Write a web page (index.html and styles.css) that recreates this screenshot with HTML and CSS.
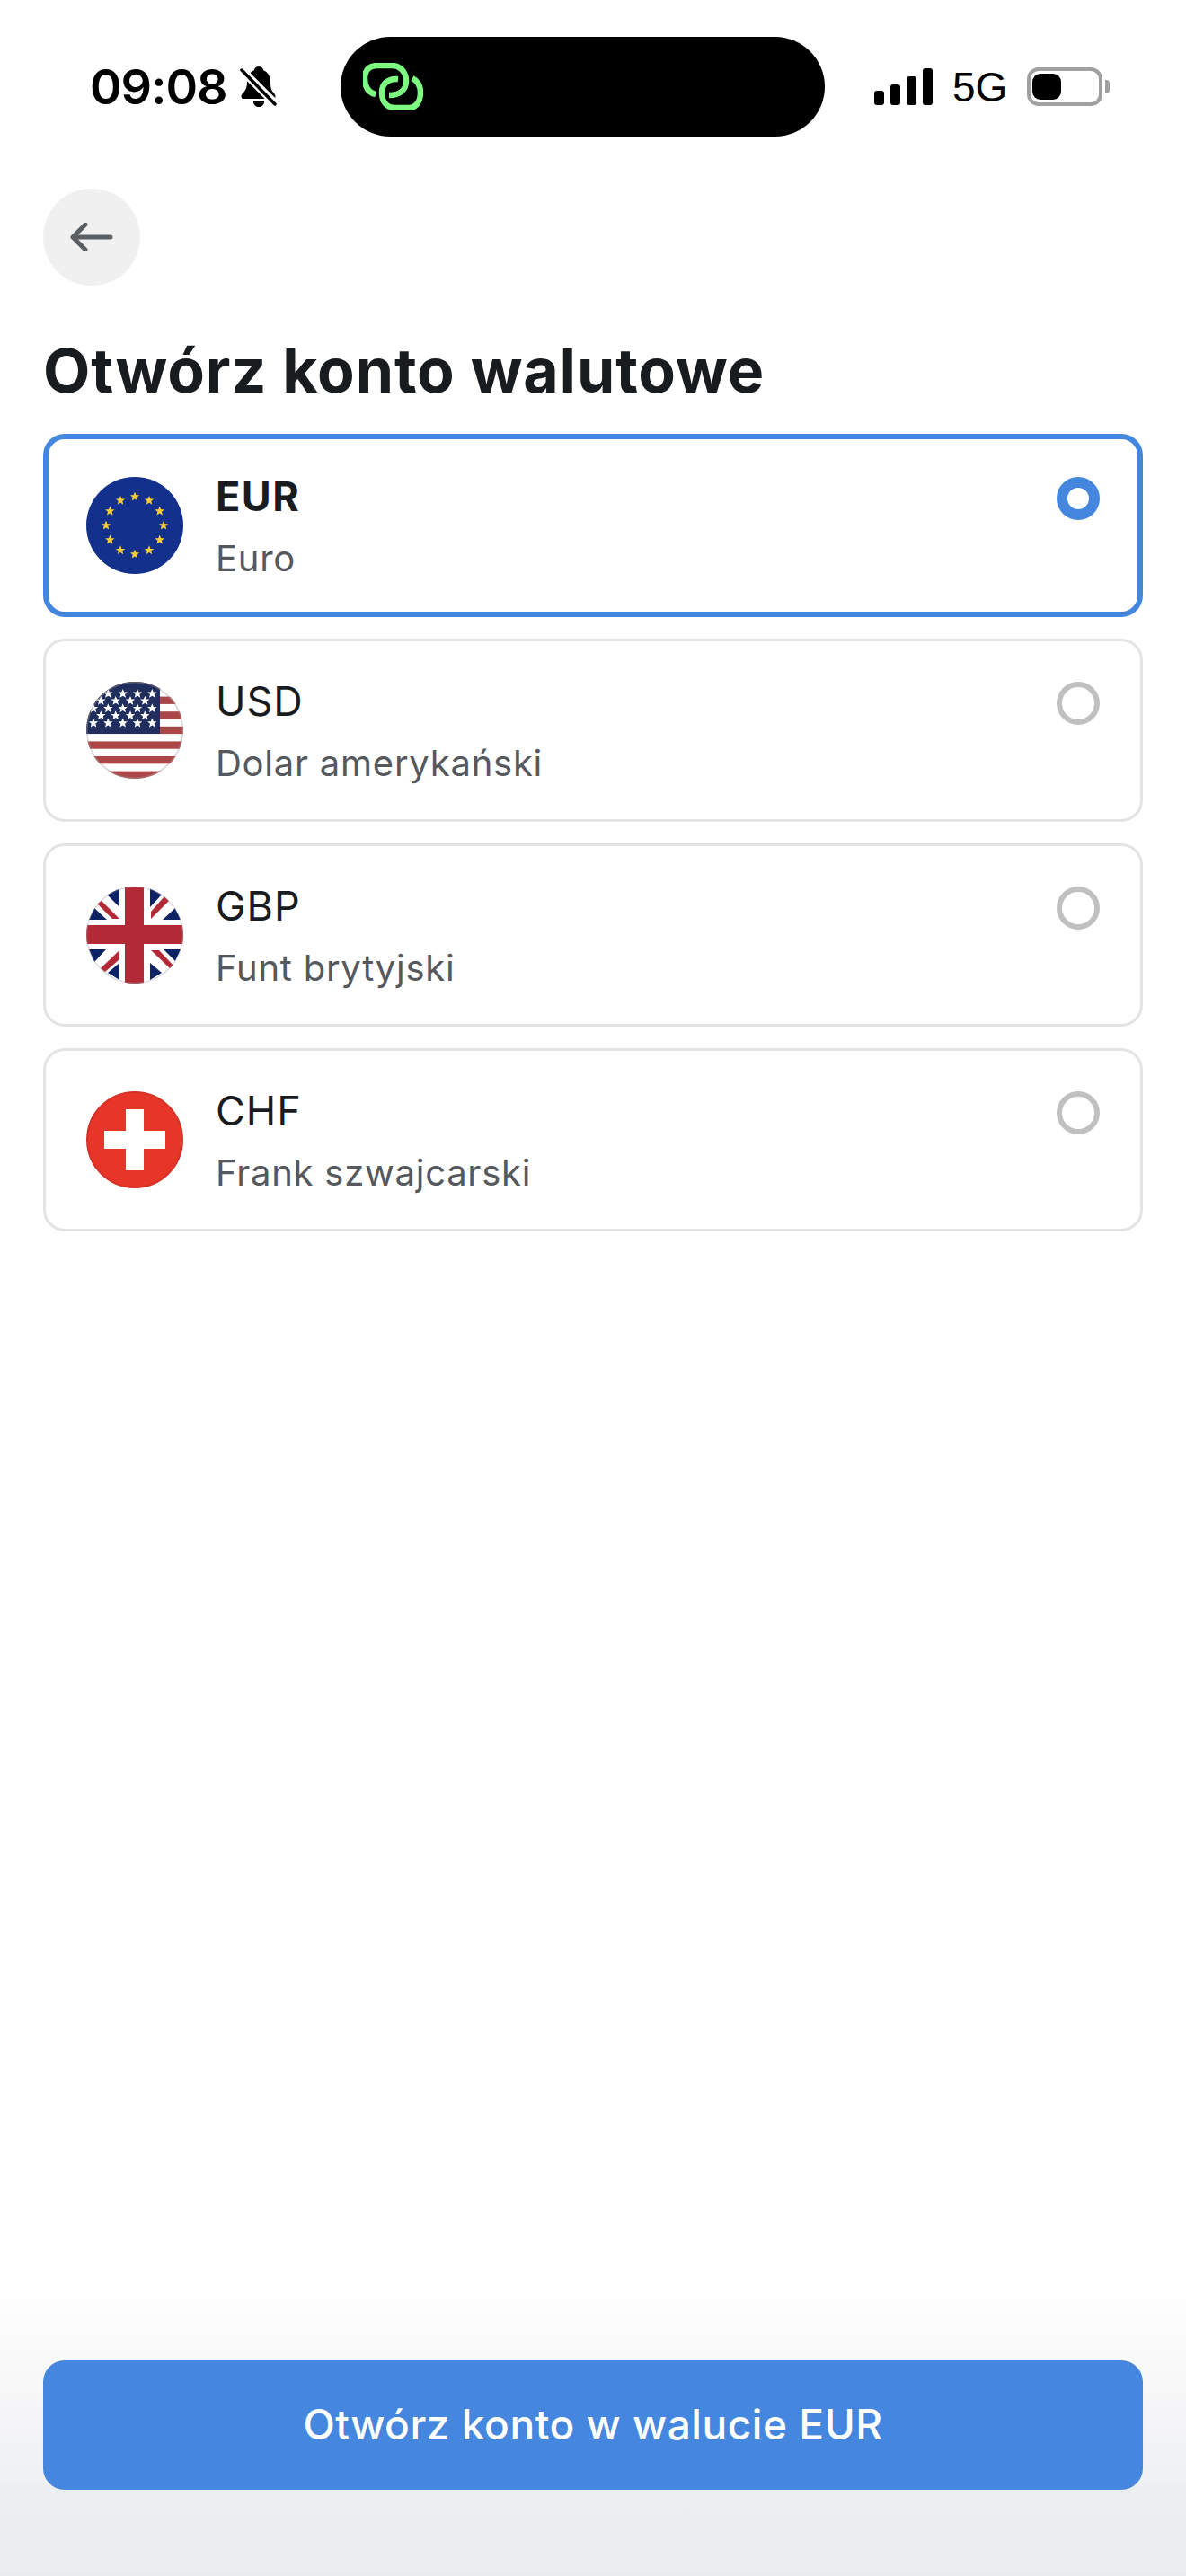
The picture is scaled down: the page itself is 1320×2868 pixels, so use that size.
FILE: index.html

```html
<!DOCTYPE html>
<html lang="pl">
<head>
    <meta charset="UTF-8">
    <meta name="viewport" content="width=device-width, initial-scale=1.0">
    <link rel="stylesheet" href="styles.css">
    <title>Otwórz konto walutowe</title>
</head>
<body>

<div class="page">
    <div class="status-bar">
        <div class="status-left">
            <span class="time">09:08</span>
            <svg class="bell" width="41" height="45" viewBox="0 0 41 45">
                <path d="M21 0C24 0 26 2 26 4C31 6 34 11 34 17C34 23 35 27 38 30C40 32 40 35 38 36H3C1 35 1 32 3 30C6 27 8 24 8 17C8 11 11 6 16 4C16 2 18 0 21 0Z" fill="#000"/>
                <path d="M15 39H27C27 43 24 45 21 45C18 45 15 43 15 39Z" fill="#000"/>
                <path d="M1 3L40 42" stroke="#fff" stroke-width="9"/>
                <path d="M2 4L39 42" stroke="#000" stroke-width="3.5" stroke-linecap="round"/>
            </svg>
        </div>
        <div class="island">
            <svg class="island-icon" width="67" height="53" viewBox="0 0 67 53" fill="none" stroke="#7dfb80" stroke-width="6.5">
                <path d="M14 35C5 33 2 26 2 17C2 7 8 3 16 3H32C43 3 48 12 48 20C48 30 41 36 29 36"/>
                <path d="M39 18C27 17 21 24 21 33C21 44 27 50 36 50H51C60 50 64 42 64 33C64 26 62 21 55 17"/>
            </svg>
        </div>
        <div class="status-right">
            <div class="signal">
                <span class="bar bar-1"></span>
                <span class="bar bar-2"></span>
                <span class="bar bar-3"></span>
                <span class="bar bar-4"></span>
            </div>
            <span class="network">5G</span>
            <div class="battery">
                <div class="battery-body"><div class="battery-level"></div></div>
                <div class="battery-nub"></div>
            </div>
        </div>
    </div>

    <div class="content">
        <div class="back-btn">
            <svg width="48" height="32" viewBox="0 0 48 32" fill="none" stroke="#5a5f63" stroke-width="5" stroke-linecap="round" stroke-linejoin="round">
                <path d="M3 16H45M17 2L3 16L17 30"/>
            </svg>
        </div>

        <h1 class="title">Otwórz konto walutowe</h1>

        <div class="currency-list">
            <div class="currency selected">
                <svg class="flag" width="108" height="108" viewBox="0 0 108 108">
                    <defs>
                        <polygon id="star" points="0,-5.4 1.5,-1.8 5.2,-1.7 2.3,.7 3.3,4.5 0,2.4 -3.3,4.5 -2.3,.7 -5.2,-1.7 -1.5,-1.8"/>
                        <clipPath id="round"><circle cx="54" cy="54" r="54"/></clipPath>
                    </defs>
                    <circle cx="54" cy="54" r="54" fill="#12308c"/>
                    <g fill="#f6cc33">
                        <use href="#star" x="54" y="22"/>
                        <use href="#star" x="70" y="26.3"/>
                        <use href="#star" x="81.7" y="38"/>
                        <use href="#star" x="86" y="54"/>
                        <use href="#star" x="81.7" y="70"/>
                        <use href="#star" x="70" y="81.7"/>
                        <use href="#star" x="54" y="86"/>
                        <use href="#star" x="38" y="81.7"/>
                        <use href="#star" x="26.3" y="70"/>
                        <use href="#star" x="22" y="54"/>
                        <use href="#star" x="26.3" y="38"/>
                        <use href="#star" x="38" y="26.3"/>
                    </g>
                </svg>
                <div class="currency-text">
                    <div class="code">EUR</div>
                    <div class="name">Euro</div>
                </div>
                <div class="radio"></div>
            </div>

            <div class="currency">
                <svg class="flag" width="108" height="108" viewBox="0 0 108 108">
                    <g clip-path="url(#round)">
                        <rect width="108" height="108" fill="#fff"/>
                        <g fill="#ab4649">
                            <rect y="0" width="108" height="8.3"/>
                            <rect y="16.6" width="108" height="8.3"/>
                            <rect y="33.2" width="108" height="8.3"/>
                            <rect y="49.8" width="108" height="8.3"/>
                            <rect y="66.4" width="108" height="8.3"/>
                            <rect y="83" width="108" height="8.3"/>
                            <rect y="99.6" width="108" height="8.4"/>
                        </g>
                        <rect width="82" height="58" fill="#1f2e5c"/>
                        <g fill="#fff">
                            <use href="#star" x="8" y="13.3"/>
                            <use href="#star" x="24.3" y="13.3"/>
                            <use href="#star" x="40.7" y="13.3"/>
                            <use href="#star" x="57" y="13.3"/>
                            <use href="#star" x="73.3" y="13.3"/>
                            <use href="#star" x="16.3" y="21.3"/>
                            <use href="#star" x="32.7" y="21.3"/>
                            <use href="#star" x="49" y="21.3"/>
                            <use href="#star" x="65.3" y="21.3"/>
                            <use href="#star" x="8" y="29.7"/>
                            <use href="#star" x="24.3" y="29.7"/>
                            <use href="#star" x="40.7" y="29.7"/>
                            <use href="#star" x="57" y="29.7"/>
                            <use href="#star" x="73.3" y="29.7"/>
                            <use href="#star" x="16.3" y="37.7"/>
                            <use href="#star" x="32.7" y="37.7"/>
                            <use href="#star" x="49" y="37.7"/>
                            <use href="#star" x="65.3" y="37.7"/>
                            <use href="#star" x="8" y="46"/>
                            <use href="#star" x="24.3" y="46"/>
                            <use href="#star" x="40.7" y="46"/>
                            <use href="#star" x="57" y="46"/>
                            <use href="#star" x="73.3" y="46"/>
                        </g>
                    </g>
                    <circle cx="54" cy="54" r="53.2" fill="none" stroke="#a89a9a" stroke-opacity=".4" stroke-width="1.6"/>
                </svg>
                <div class="currency-text">
                    <div class="code">USD</div>
                    <div class="name">Dolar amerykański</div>
                </div>
                <div class="radio"></div>
            </div>

            <div class="currency">
                <svg class="flag" width="108" height="108" viewBox="0 0 108 108">
                    <g clip-path="url(#round)">
                        <rect width="108" height="108" fill="#fff"/>
                        <g fill="#0b2265">
                            <polygon points="23,9 37,2 37,23"/>
                            <polygon points="3,37 9,24 23,37"/>
                            <polygon points="71,2 84,9 71,23"/>
                            <polygon points="85,37 99,24 105,37"/>
                            <polygon points="86,70 105,70 99,83"/>
                            <polygon points="71,85 71,104 84,96"/>
                            <polygon points="3,70 22,70 9,84"/>
                            <polygon points="24,96 37,85 37,104"/>
                        </g>
                        <g fill="#b22a36">
                            <polygon points="12,19 17,16 37,36 29,36"/>
                            <polygon points="72,36 72,28 87,11 92,16"/>
                            <polygon points="72,71 81,71 97,88 94,92"/>
                            <polygon points="37,71 37,81 21,95 16,91"/>
                            <rect x="43" width="21" height="108"/>
                            <rect y="43" width="108" height="21"/>
                        </g>
                    </g>
                    <circle cx="54" cy="54" r="53.4" fill="none" stroke="#9a9aa8" stroke-opacity=".4" stroke-width="1.2"/>
                </svg>
                <div class="currency-text">
                    <div class="code">GBP</div>
                    <div class="name">Funt brytyjski</div>
                </div>
                <div class="radio"></div>
            </div>

            <div class="currency">
                <svg class="flag" width="108" height="108" viewBox="0 0 108 108">
                    <circle cx="54" cy="54" r="53" fill="#e8352a" stroke="#d43226" stroke-width="2"/>
                    <path d="M44 20H64V44H88V64H64V88H44V64H20V44H44Z" fill="#fff"/>
                </svg>
                <div class="currency-text">
                    <div class="code">CHF</div>
                    <div class="name">Frank szwajcarski</div>
                </div>
                <div class="radio"></div>
            </div>
        </div>
    </div>

    <div class="footer">
        <div class="open-btn">Otwórz konto w walucie EUR</div>
    </div>
</div>

</body>
</html>
```

FILE: styles.css

```css
* {
    box-sizing: border-box;
}

body {
    margin: 0;
    background: #fff;
    font-family: 'Inter', 'Liberation Sans', sans-serif;
    color: #191c1f;
}

.page {
    width: 1320px;
    height: 2868px;
    display: flex;
    flex-direction: column;
}

/* status bar */
.status-bar {
    display: flex;
    align-items: flex-start;
    height: 210px;
    padding-top: 41px;
}

.status-left {
    width: 379px;
    height: 111px;
    padding-left: 100px;
    display: flex;
    align-items: center;
    gap: 14px;
}

.time {
    font-size: 54px;
    font-weight: 600;
    letter-spacing: -1px;
    color: #000;
    line-height: 1;
}

.bell {
    flex-shrink: 0;
}

.island {
    width: 539px;
    height: 111px;
    background: #000;
    border-radius: 56px;
    padding: 29px 0 0 25px;
}

.island-icon {
    display: block;
}

.status-right {
    flex: 1;
    height: 111px;
    padding-left: 55px;
    display: flex;
    align-items: center;
}

.signal {
    display: flex;
    align-items: flex-end;
    gap: 7px;
    height: 41px;
}

.bar {
    width: 11px;
    background: #000;
    border-radius: 3px;
}

.bar-1 { height: 16px; }
.bar-2 { height: 23px; }
.bar-3 { height: 32px; }
.bar-4 { height: 41px; }

.network {
    margin-left: 22px;
    font-family: 'Liberation Sans', sans-serif;
    font-size: 46px;
    line-height: 1;
    color: #000;
}

.battery {
    margin-left: 22px;
    display: flex;
    align-items: center;
    gap: 3px;
}

.battery-body {
    width: 84px;
    height: 43px;
    border: 4px solid #a0a0a0;
    border-radius: 13px;
    padding: 3px 2px;
}

.battery-level {
    width: 32px;
    height: 100%;
    background: #000;
    border-radius: 9px;
}

.battery-nub {
    width: 5px;
    height: 15px;
    background: #a0a0a0;
    border-radius: 0 4px 4px 0;
}

/* main content */
.content {
    flex: 1;
    padding: 0 48px;
}

.back-btn {
    width: 108px;
    height: 108px;
    border-radius: 50%;
    background: #f0f0f0;
    display: flex;
    align-items: center;
    justify-content: center;
}

.title {
    margin: 54px 0 0;
    font-size: 68px;
    font-weight: 700;
    letter-spacing: .9px;
    line-height: 80px;
    color: #191c1f;
}

.currency-list {
    margin-top: 31px;
    display: flex;
    flex-direction: column;
    gap: 24px;
}

.currency {
    height: 204px;
    padding: 45px 45px 0;
    border: 3px solid #e3e4e6;
    border-radius: 24px;
    display: flex;
    align-items: flex-start;
    background: #fff;
}

.currency.selected {
    padding: 42px 42px 0;
    border: 6px solid #4587de;
}

.flag {
    flex-shrink: 0;
    display: block;
}

.currency-text {
    flex: 1;
    margin-left: 36px;
}

.code {
    font-size: 45px;
    line-height: 50px;
    letter-spacing: 1px;
    margin-top: -3px;
}

.selected .code {
    font-weight: 700;
    letter-spacing: 1.5px;
}

.name {
    margin-top: 20px;
    font-size: 40px;
    line-height: 48px;
    letter-spacing: .75px;
    color: #55595e;
}

.radio {
    width: 48px;
    height: 48px;
    border: 6px solid #c0c0c0;
    border-radius: 50%;
}

.selected .radio {
    border: 12px solid #4587de;
}

/* footer button */
.footer {
    padding: 88px 48px 96px;
    background: linear-gradient(to bottom, #fff 0, #eff0f2 227px, #edeef0 227px, #ebecee 100%);
}

.open-btn {
    height: 144px;
    padding-bottom: 2px;
    background: #4587de;
    border-radius: 24px;
    color: #fff;
    font-size: 46px;
    font-weight: 500;
    letter-spacing: .55px;
    display: flex;
    align-items: center;
    justify-content: center;
}
```
